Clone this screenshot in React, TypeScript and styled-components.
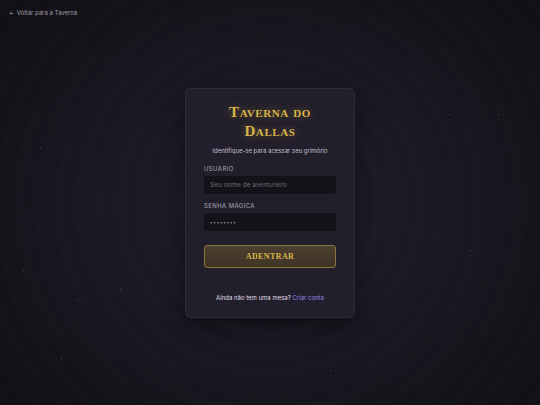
import styled, { createGlobalStyle } from "styled-components";

const GlobalStyle = createGlobalStyle`
  html, body, #root {
    margin: 0;
    padding: 0;
    width: 100%;
    height: 100%;
  }
  body {
    background: #141219;
    font-family: Inter, "Noto Sans", sans-serif;
  }
  * {
    box-sizing: border-box;
  }
`;

const stars = [
  { x: 23, y: 270 },
  { x: 77, y: 300 },
  { x: 120, y: 289 },
  { x: 61, y: 358 },
  { x: 40, y: 148 },
  { x: 449, y: 114 },
  { x: 498, y: 114 },
  { x: 470, y: 250 },
  { x: 330, y: 370 },
];

export default function App() {
  return (
    <Page>
      <GlobalStyle />
      {stars.map((s, i) => (
        <Star key={i} style={{ left: s.x, top: s.y }} />
      ))}
      <TopBar>
        <BackLink href="#">
          <span>←</span> Voltar para a Taverna
        </BackLink>
      </TopBar>
      <Center>
        <Card>
          <Title>
            Taverna do
            <br />
            Dallas
          </Title>
          <Subtitle>Identifique-se para acessar seu grimório</Subtitle>
          <Form onSubmit={(e) => e.preventDefault()}>
            <Field>
              <Label>Usuário</Label>
              <Input type="text" placeholder="Seu nome de aventureiro" />
            </Field>
            <Field>
              <Label>Senha Mágica</Label>
              <Input type="password" defaultValue="12345678" $masked />
            </Field>
            <SubmitButton type="submit">Adentrar</SubmitButton>
          </Form>
          <Footer>
            Ainda não tem uma mesa? <FooterLink href="#">Criar conta</FooterLink>
          </Footer>
        </Card>
      </Center>
    </Page>
  );
}

const Page = styled.div`
  position: relative;
  width: 100%;
  min-height: 100vh;
  display: flex;
  flex-direction: column;
  overflow: hidden;
  background:
    repeating-radial-gradient(
      circle at 50% 50%,
      rgba(255, 255, 255, 0) 0px,
      rgba(255, 255, 255, 0.012) 10px,
      rgba(255, 255, 255, 0) 20px
    ),
    radial-gradient(ellipse at 50% 52%, #201d2b 0%, #1a1823 40%, #141219 75%, #110f15 100%);
`;

const Star = styled.div`
  position: absolute;
  width: 1px;
  height: 1px;
  border-radius: 50%;
  background: rgba(200, 190, 230, 0.45);
`;

const TopBar = styled.div`
  display: flex;
  padding: 8px 9px 0;
`;

const BackLink = styled.a`
  display: flex;
  gap: 2px;
  align-items: center;
  font-size: 6px;
  line-height: 9px;
  color: #a19eac;
  text-decoration: none;
`;

const Center = styled.div`
  flex: 1;
  display: flex;
  justify-content: center;
  align-items: flex-start;
  padding-top: 71px;
`;

const Card = styled.div`
  width: 170px;
  padding: 14px 18px 15px;
  border-radius: 6px;
  background: #221f2c;
  border: 1px solid rgba(255, 255, 255, 0.06);
  box-shadow: 0 8px 24px rgba(0, 0, 0, 0.45);
  display: flex;
  flex-direction: column;
  align-items: stretch;
`;

const Title = styled.h1`
  margin: 0;
  font-family: "Liberation Serif", "DejaVu Serif", serif;
  font-variant: small-caps;
  font-weight: 700;
  font-size: 15px;
  line-height: 19px;
  letter-spacing: 0.6px;
  text-align: center;
  color: #d9b447;
  text-shadow: 0 0 8px rgba(217, 180, 71, 0.45);
`;

const Subtitle = styled.p`
  margin: 5px 0 0;
  font-size: 6px;
  line-height: 9px;
  text-align: center;
  color: #c3bfcc;
`;

const Form = styled.form`
  margin-top: 10px;
  display: flex;
  flex-direction: column;
  gap: 8px;
`;

const Field = styled.div`
  display: flex;
  flex-direction: column;
  gap: 3px;
`;

const Label = styled.label`
  font-size: 6px;
  line-height: 8px;
  letter-spacing: 0.4px;
  text-transform: uppercase;
  color: #aca8b6;
`;

const Input = styled.input<{ $masked?: boolean }>`
  width: 100%;
  height: 18px;
  padding: 0 6px;
  border: none;
  border-radius: 2px;
  outline: none;
  background: #141219;
  color: ${({ $masked }) => ($masked ? "#a29eab" : "#c8c4d0")};
  font-family: Inter, "Noto Sans", sans-serif;
  font-size: ${({ $masked }) => ($masked ? "4.5px" : "6.5px")};
  letter-spacing: ${({ $masked }) => ($masked ? "0.8px" : "0")};

  &::placeholder {
    color: #6f6b78;
  }
`;

const SubmitButton = styled.button`
  margin-top: 6px;
  height: 23px;
  border: 1px solid #8d7542;
  border-radius: 3px;
  background: linear-gradient(180deg, #4b3f2e 0%, #3e3426 100%);
  color: #d9b44a;
  font-family: "Liberation Serif", "DejaVu Serif", serif;
  font-weight: 700;
  font-size: 8px;
  letter-spacing: 0.4px;
  text-transform: uppercase;
  cursor: pointer;
`;

const Footer = styled.p`
  margin: 25px 0 0;
  font-size: 6px;
  line-height: 9px;
  text-align: center;
  color: #e2dfe8;
`;

const FooterLink = styled.a`
  color: #9b80e6;
  text-decoration: none;
`;
